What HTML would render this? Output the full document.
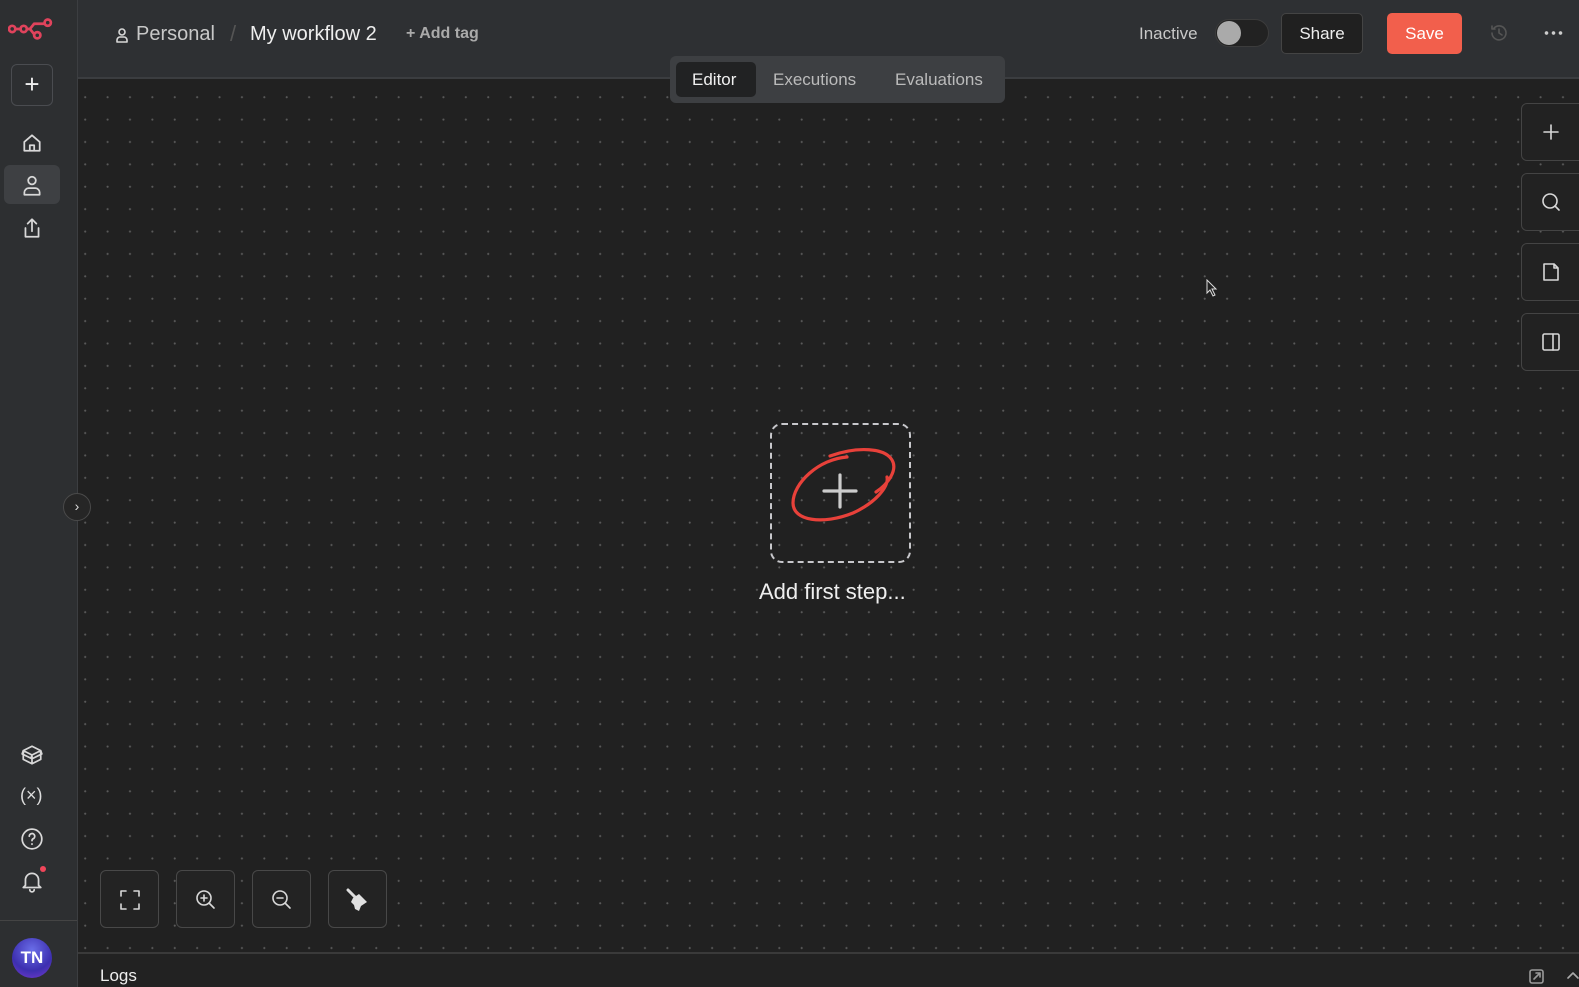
<!DOCTYPE html>
<html><head><meta charset="utf-8"><style>
*{box-sizing:border-box;margin:0;padding:0}
body{width:1579px;height:987px;overflow:hidden;background:#212121;font-family:"Liberation Sans",sans-serif;position:relative;color:#e8e8e8}
.side{position:absolute;left:0;top:0;width:78px;height:987px;background:#2d2f31;border-right:1px solid #3c3e41}
.hdr{position:absolute;left:78px;top:0;right:0;height:79px;background:#2e3033;border-bottom:2px solid #3b3d40}
.canvas{position:absolute;left:78px;top:79px;right:0;bottom:35px;background-color:#212121;background-image:radial-gradient(circle,#5a5a5a 0.9px,transparent 1.2px);background-size:22.4px 22.4px;background-position:-4px 7px}
.logs{position:absolute;left:78px;right:0;bottom:0;height:35px;background:#222;border-top:2px solid #3a3a3a}
.ic{position:absolute;stroke:#d8d8d8;fill:none;stroke-width:1.6;stroke-linecap:round;stroke-linejoin:round}
.rbtn{position:absolute;left:1521px;width:64px;height:58px;border:1px solid #444;border-radius:6px;background:#222}
.bbtn{position:absolute;top:870px;width:59px;height:58px;border:1px solid #484848;border-radius:6px;background:#232323}
</style></head><body>
<div class="side">
<svg class="ic" style="left:8px;top:16px" width="46" height="28" viewBox="0 0 44 26"><g stroke="#e0435c" stroke-width="2.6"><circle cx="4" cy="12" r="3"/><circle cx="15" cy="12" r="3"/><circle cx="28" cy="18" r="3"/><circle cx="38" cy="6" r="3"/><path d="M7 12h5M18 12h3l4 5M21 12l4-5h10"/></g></svg>
<div style="position:absolute;left:11px;top:64px;width:42px;height:42px;border:1px solid #4a4c50;border-radius:6px;color:#eee;font-size:26px;text-align:center;line-height:38px">+</div>
<svg class="ic" style="left:21px;top:132px" width="22" height="22" viewBox="0 0 20 20"><path d="M3 9l7-6 7 6v8H3z M8 17v-5h4v5"/></svg>
<div style="position:absolute;left:4px;top:165px;width:56px;height:39px;background:#3e4043;border-radius:6px"></div>
<svg class="ic" style="left:21px;top:174px" width="22" height="24" viewBox="0 0 20 22"><circle cx="10" cy="6" r="3.5"/><path d="M3 19v-2a4 4 0 0 1 4-4h6a4 4 0 0 1 4 4v2z"/></svg>
<svg class="ic" style="left:21px;top:216px" width="22" height="24" viewBox="0 0 20 22"><path d="M10 14V3M6 7l4-4 4 4M4 11v8h12v-8"/></svg>
<svg class="ic" style="left:20px;top:743px" width="24" height="24" viewBox="0 0 22 22"><path d="M3 7l8-4 8 4-8 4z M3 7v8l8 4 8-4V7M11 11v8M3 7l-1 3 8 4 1-3M19 7l1 3-8 4"/></svg>
<div style="position:absolute;left:20px;top:785px;font-size:18px;color:#ddd">(×)</div>
<svg class="ic" style="left:20px;top:827px" width="24" height="24" viewBox="0 0 22 22"><circle cx="11" cy="11" r="9"/><path d="M8.5 8.5a2.5 2.5 0 1 1 3.5 2.3c-.7.4-1 .9-1 1.7M11 15.5v.3"/></svg>
<svg class="ic" style="left:20px;top:869px" width="24" height="24" viewBox="0 0 22 22"><path d="M5 15V10a6 6 0 0 1 12 0v5l2 2H3z M9 19a2 2 0 0 0 4 0"/></svg>
<div style="position:absolute;left:40px;top:866px;width:6px;height:6px;border-radius:50%;background:#f0465a"></div>
<div style="position:absolute;left:0;top:920px;width:77px;border-top:1px solid #444"></div>
<div style="position:absolute;left:12px;top:938px;width:40px;height:40px;border-radius:50%;background:radial-gradient(circle at 50% 30%,#6a6ee8,#3d2fb0 60%,#7a3bd0);color:#fff;font-size:17px;font-weight:bold;text-align:center;line-height:40px">TN</div>
</div>
<div style="position:absolute;left:63px;top:493px;width:28px;height:28px;border-radius:50%;background:#262626;border:1px solid #4a4a4a;color:#ddd;font-size:14px;text-align:center;line-height:25px;z-index:3">›</div>
<div class="hdr">
<svg class="ic" style="left:37px;top:27px" width="14" height="16" viewBox="0 0 14 16"><circle cx="7" cy="5" r="3"/><path d="M2 15v-2a3 3 0 0 1 3-3h4a3 3 0 0 1 3 3v2z"/></svg>
<div style="position:absolute;left:58px;top:23px;font-size:20px;color:#c8c8c8">Personal</div>
<div style="position:absolute;left:152px;top:21px;font-size:22px;color:#555">/</div>
<div style="position:absolute;left:172px;top:23px;font-size:20px;color:#eee">My workflow 2</div>
<div style="position:absolute;left:328px;top:25px;font-size:16px;color:#aaa;font-weight:bold">+ Add tag</div>
<div style="position:absolute;left:1061px;top:24px;font-size:17px;color:#c8c8c8">Inactive</div>
<div style="position:absolute;left:1137px;top:19px;width:54px;height:28px;border-radius:14px;background:#222;border:1px solid #3c3c3c"></div>
<div style="position:absolute;left:1139px;top:21px;width:24px;height:24px;border-radius:50%;background:#aaa"></div>
<div style="position:absolute;left:1203px;top:13px;width:82px;height:41px;border-radius:5px;background:#202020;border:1px solid #444;font-size:17px;text-align:center;line-height:39px;color:#eee">Share</div>
<div style="position:absolute;left:1309px;top:13px;width:75px;height:41px;border-radius:5px;background:#f25f4c;font-size:17px;text-align:center;line-height:41px;color:#fff">Save</div>
<svg class="ic" style="left:1411px;top:23px;stroke:#555" width="20" height="20" viewBox="0 0 20 20"><path d="M3 10a7 7 0 1 0 2-5M3 3v3h3M10 6v4l3 2"/></svg>
<div style="position:absolute;left:1465px;top:30px;width:20px;height:6px;background:radial-gradient(circle,#ccc 1.6px,transparent 2px) 0 0/7px 6px"></div>
</div>
<div style="position:absolute;left:670px;top:56px;width:335px;height:47px;background:#3d3f42;border-radius:6px;z-index:2">
<div style="position:absolute;left:6px;top:6px;width:80px;height:35px;background:#212223;border-radius:5px"></div>
<div style="position:absolute;left:22px;top:14px;font-size:17px;color:#f0f0f0">Editor</div>
<div style="position:absolute;left:103px;top:14px;font-size:17px;color:#bbb">Executions</div>
<div style="position:absolute;left:225px;top:14px;font-size:17px;color:#bbb">Evaluations</div>
</div>
<div class="canvas"></div>
<div class="rbtn" style="top:103px"><svg class="ic" style="left:19px;top:18px" width="20" height="20" viewBox="0 0 20 20"><path d="M10 3v14M3 10h14"/></svg></div>
<div class="rbtn" style="top:173px"><svg class="ic" style="left:18px;top:17px" width="22" height="22" viewBox="0 0 22 22"><circle cx="10" cy="10" r="7"/><path d="M15 15l4 4"/></svg></div>
<div class="rbtn" style="top:243px"><svg class="ic" style="left:19px;top:17px" width="20" height="22" viewBox="0 0 20 22"><path d="M3 3h10l4 4v12H3z M13 3v4h4"/></svg></div>
<div class="rbtn" style="top:313px"><svg class="ic" style="left:19px;top:18px" width="20" height="20" viewBox="0 0 20 20"><rect x="2" y="2" width="16" height="16" rx="1.5"/><path d="M12 2v16"/></svg></div>
<div style="position:absolute;left:770px;top:423px;width:141px;height:140px;border:2.5px dashed #c8c8cc;border-radius:12px"></div>
<svg style="position:absolute;left:785px;top:443px" width="115" height="92" viewBox="0 0 115 92"><path d="M62 14C34 16 8 40 8 60c0 18 30 22 60 10 22-10 36-26 34-36M45 13c28-10 55-8 62 4 6 10-4 24-16 32" fill="none" stroke="#e8413a" stroke-width="3.2" stroke-linecap="round"/></svg>
<svg class="ic" style="left:821px;top:472px;stroke:#ccc;stroke-width:3.2" width="38" height="38" viewBox="0 0 38 38"><path d="M19 3v32M3 19h32"/></svg>
<div style="position:absolute;left:759px;top:579px;font-size:22px;color:#eee">Add first step...</div>
<div class="bbtn" style="left:100px"><svg class="ic" style="left:18px;top:18px" width="22" height="22" viewBox="0 0 22 22"><path d="M2 7V2h5M15 2h5v5M20 15v5h-5M7 20H2v-5"/></svg></div>
<div class="bbtn" style="left:176px"><svg class="ic" style="left:17px;top:17px" width="24" height="24" viewBox="0 0 24 24"><circle cx="10" cy="10" r="7"/><path d="M15 15l5 5M10 7v6M7 10h6"/></svg></div>
<div class="bbtn" style="left:252px"><svg class="ic" style="left:17px;top:17px" width="24" height="24" viewBox="0 0 24 24"><circle cx="10" cy="10" r="7"/><path d="M15 15l5 5M7 10h6"/></svg></div>
<div class="bbtn" style="left:328px"><svg style="position:absolute;left:16px;top:16px" width="26" height="26" viewBox="0 0 26 26"><path d="M3 3l7 7" stroke="#ddd" stroke-width="3" stroke-linecap="round"/><path d="M8 11l6-4 8 8-6 4-2 5-4-2-1-4-3-3z" fill="#e0e0e0"/></svg></div>
<div class="logs"><div style="position:absolute;left:22px;top:12px;font-size:17px;color:#eee">Logs</div>
<svg class="ic" style="left:1449px;top:13px;stroke:#999" width="18" height="18" viewBox="0 0 18 18"><rect x="3" y="3" width="13" height="13" rx="2"/><path d="M7 12l6-6M9 6h4v4"/></svg>
<svg class="ic" style="left:1489px;top:17px;stroke:#aaa" width="12" height="8" viewBox="0 0 12 8"><path d="M1 7l5-5 5 5"/></svg></div>
<svg style="position:absolute;left:1206px;top:279px" width="12" height="18" viewBox="0 0 12 18"><path d="M1 1v13l3-3 3 6 2-1-3-6h4z" fill="#222" stroke="#ddd" stroke-width="1"/></svg>
</body></html>
